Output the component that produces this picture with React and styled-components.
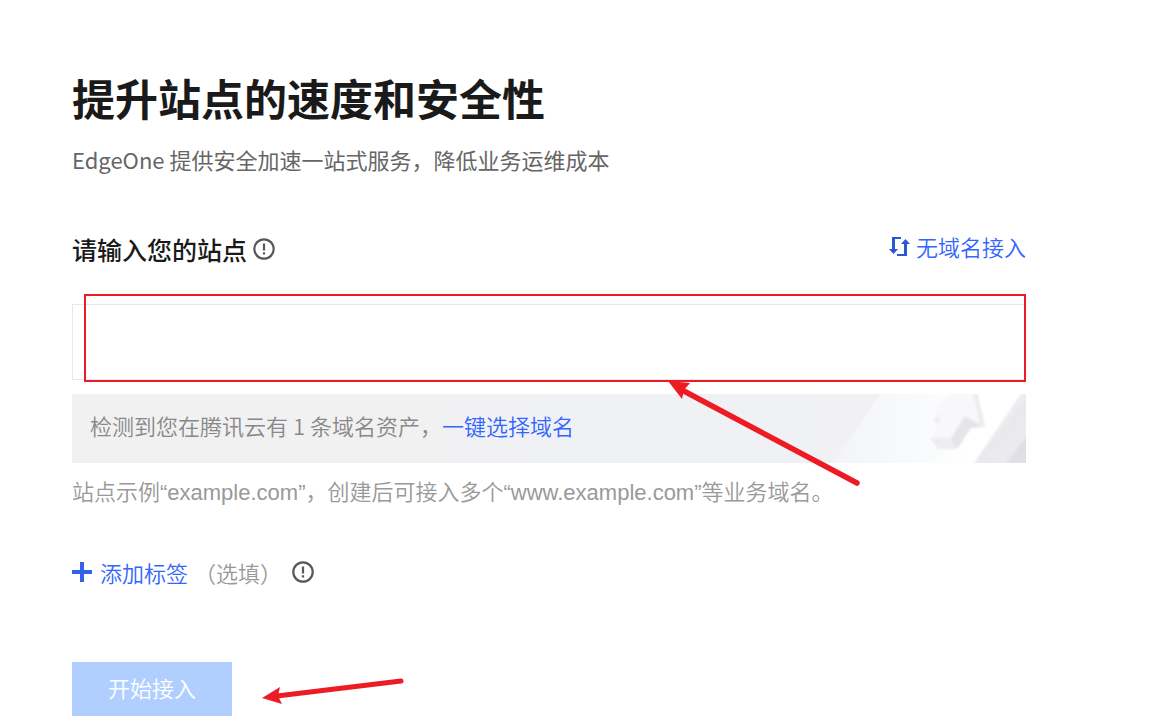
import { useState } from "react";
import styled, { createGlobalStyle } from "styled-components";

const InfoIcon = () => (
    <InfoSvg viewBox="0 0 22 22" aria-hidden="true">
        <circle cx="11" cy="11" r="9.7" fill="none" stroke="currentColor" strokeWidth="2.2" />
        <path d="M9.9 5.4h2.2v7H9.900zM9.900 14.200h2.200v2.200H9.900z" fill="currentColor" />
    </InfoSvg>
);

const SwitchIcon = () => (
    <svg width="21" height="21" viewBox="0 0 21 21" aria-hidden="true">
        <path d="M3 1h9v2H6v10h3l-4.500 5L0 13h3z" fill="#2b55d9" />
        <path d="M18 20H8v-2h7V8h-3l4.500-5L21 8h-3z" fill="#2b55d9" />
    </svg>
);

const PlusIcon = () => (
    <svg width="20" height="20" viewBox="0 0 20 20" aria-hidden="true">
        <path d="M8 0h4v8h8v4h-8v8H8v-8H0V8h8z" fill="#3262e6" />
    </svg>
);

const BannerArt = () => (
    <Art viewBox="0 0 250 69" preserveAspectRatio="xMaxYMid slice" aria-hidden="true">
        <defs>
            <linearGradient id="fade">
                <stop offset="0" stopColor="#f0f1f5" />
                <stop offset="0.4" stopColor="#f1f1f3" />
                <stop offset="1" stopColor="#f3f3f5" />
            </linearGradient>
            <linearGradient id="shine">
                <stop offset="0" stopColor="#f3f4f6" />
                <stop offset="0.5" stopColor="#fafbfc" />
                <stop offset="0.7" stopColor="#ffffff" />
            </linearGradient>
            <linearGradient id="beam" x1="0" y1="0" x2="1" y2="1">
                <stop offset="0.3" stopColor="#f6f6f8" />
                <stop offset="0.5" stopColor="#e9e9ed" />
                <stop offset="1" stopColor="#efeff2" />
            </linearGradient>
            <filter id="soft">
                <feGaussianBlur stdDeviation="1" />
            </filter>
        </defs>
        <path d="M0 0h250v69H0z" fill="url(#fade)" />
        <path d="M104 0h146v69H56z" fill="url(#shine)" />
        <g filter="url(#soft)">
            <path d="M166 6l12-8h22l9 35-13-2-15 24h-19l-8-11 7-10-4-9z" fill="#f8f8fa" />
            <path d="M197-2h4l8 34-5-2z" fill="#ebebef" />
            <path d="M189 22l19 11-13 1-14 21-6-11z" fill="#e5e4ea" />
            <path d="M154 44h21l6 11h-19z" fill="#ececf1" />
            <path d="M157 24l8-2-3 9z" fill="#efeff3" />
            <path d="M246-2h14v80h-68z" fill="url(#beam)" />
            <path d="M260 30v48h-37z" fill="#e0dfe5" />
        </g>
    </Art>
);

const App = () => {
    const [site, setSite] = useState("");

    return (
        <>
            <GlobalStyle />
            <Page>
                <Title>提升站点的速度和安全性</Title>
                <Subtitle>EdgeOne 提供安全加速一站式服务，降低业务运维成本</Subtitle>

                <FieldHeader>
                    <Label htmlFor="site">
                        请输入您的站点
                        <InfoIcon />
                    </Label>
                    <SwitchLink href="#no-domain">
                        <SwitchIcon />
                        无域名接入
                    </SwitchLink>
                </FieldHeader>

                <Field>
                    <SiteInput id="site" value={site} onChange={(e) => setSite(e.target.value)} />
                    <Highlight />
                    <FieldArrow viewBox="0 0 194 106" aria-hidden="true">
                        <path d="M14 9L189 102" stroke="#ed1c24" strokeWidth="5.500" strokeLinecap="round" />
                        <path d="M0 0l22 2-6 7-2 9z" fill="#ed1c24" />
                    </FieldArrow>
                </Field>

                <Banner>
                    <BannerArt />
                    <BannerText>
                        检测到您在腾讯云有 1 条域名资产，<Link href="#select">一键选择域名</Link>
                    </BannerText>
                </Banner>

                <Hint>站点示例“example.com”，创建后可接入多个“www.example.com”等业务域名。</Hint>

                <TagRow>
                    <AddTag type="button">
                        <PlusIcon />
                        添加标签
                    </AddTag>
                    <Optional>（选填）</Optional>
                    <InfoIcon />
                </TagRow>

                <Actions>
                    <StartButton type="button">开始接入</StartButton>
                    <svg width="142" height="30" viewBox="0 0 142 30" aria-hidden="true">
                        <path d="M15 22L139 7" stroke="#ed1c24" strokeWidth="5" strokeLinecap="round" />
                        <path d="M0 24l18-11-2 9 4 8z" fill="#ed1c24" />
                    </svg>
                </Actions>
            </Page>
        </>
    );
};

const GlobalStyle = createGlobalStyle`
    * {
        box-sizing: border-box;
    }

    body {
        margin: 0;
        background: #fff;
        font-family: "Noto Sans CJK SC", sans-serif;
        font-size: 22px;
        line-height: 32px;
    }

    button, input {
        font: inherit;
    }
`;

const Page = styled.main`
    padding: 67px 139px 0 72px;
`;

const Title = styled.h1`
    margin: 0;
    font-size: 43px;
    font-weight: 700;
    line-height: 60px;
    color: #1a1a1a;
`;

const Subtitle = styled.p`
    margin: 16px 0 0;
    color: #666;
`;

const FieldHeader = styled.div`
    display: flex;
    align-items: flex-start;
    justify-content: space-between;
    margin-top: 58px;
`;

const Label = styled.label`
    display: flex;
    align-items: center;
    gap: 6px;
    font-size: 25px;
    font-weight: 500;
    color: #1a1a1a;
`;

const InfoSvg = styled.svg`
    width: 22px;
    height: 22px;
    color: #595959;
`;

const Link = styled.a`
    font-weight: 350;
    color: #3366ff;
    text-decoration: none;
`;

const SwitchLink = styled(Link)`
    display: flex;
    align-items: center;
    gap: 6px;
    line-height: 26px;
`;

const Field = styled.div`
    position: relative;
    display: flex;
    margin-top: 39px;
`;

const SiteInput = styled.input`
    width: 100%;
    height: 76px;
    padding: 0 18px;
    border: 1px solid #e7e8ee;
    background: #fff;
    outline: none;
`;

const Highlight = styled.div`
    position: absolute;
    inset: -10px 0 -2px 12px;
    border: 2px solid #ed1c24;
    pointer-events: none;
`;

const FieldArrow = styled.svg`
    position: absolute;
    z-index: 1;
    top: 77px;
    right: 164px;
    width: 194px;
    height: 106px;
    pointer-events: none;
`;

const Banner = styled.div`
    position: relative;
    margin-top: 14px;
    padding: 15px 18px 22px;
    background: linear-gradient(90deg, #f1f1f1 30%, #f0f1f5 55%);
`;

const Art = styled.svg`
    position: absolute;
    top: 0;
    right: 0;
    width: 250px;
    height: 100%;
`;

const BannerText = styled.p`
    position: relative;
    margin: 0;
    font-weight: 350;
    color: #888;
`;

const Hint = styled.p`
    margin: 14px 0 0;
    font-family: "Liberation Sans", "Noto Sans CJK SC", sans-serif;
    font-weight: 350;
    color: #999;
`;

const TagRow = styled.div`
    display: flex;
    align-items: center;
    margin-top: 47px;
`;

const AddTag = styled.button`
    display: flex;
    align-items: center;
    gap: 8px;
    padding: 0;
    border: none;
    background: none;
    font-weight: 350;
    color: #3366ff;
    cursor: pointer;
`;

const Optional = styled.span`
    margin-right: 10px;
    margin-left: 6px;
    font-weight: 350;
    color: #999;
`;

const Actions = styled.div`
    display: flex;
    align-items: center;
    gap: 30px;
    margin-top: 74px;
`;

const StartButton = styled.button`
    min-width: 160px;
    padding: 9px 36px 13px;
    border: none;
    background: #b0cfff;
    font-weight: 350;
    color: #fff;
    cursor: pointer;
`;

export default App;
